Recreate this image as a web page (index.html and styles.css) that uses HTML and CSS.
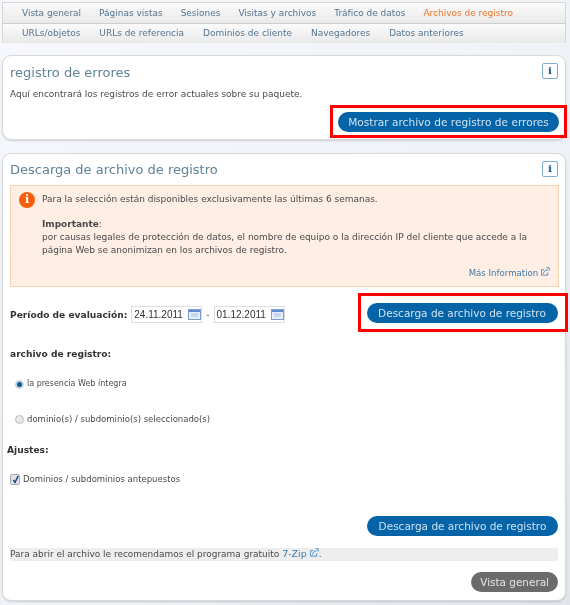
FILE: index.html
```html
<!DOCTYPE html>
<html lang="es">
<head>
    <meta charset="UTF-8">
    <meta name="viewport" content="width=device-width, initial-scale=1.0">
    <title>Archivos de registro</title>
    <link rel="stylesheet" href="styles.css">
</head>
<body>
    <nav class="tabs">
        <div class="tab-row tab-row-main">
            <a href="#">Vista general</a>
            <a href="#">Páginas vistas</a>
            <a href="#">Sesiones</a>
            <a href="#">Visitas y archivos</a>
            <a href="#">Tráfico de datos</a>
            <a href="#" class="active">Archivos de registro</a>
        </div>
        <div class="tab-row">
            <a href="#">URLs/objetos</a>
            <a href="#">URLs de referencia</a>
            <a href="#">Dominios de cliente</a>
            <a href="#">Navegadores</a>
            <a href="#">Datos anteriores</a>
        </div>
    </nav>

    <section class="card card-errors">
        <a href="#" class="info-btn">i</a>
        <h2 class="card-title">registro de errores</h2>
        <p class="card-text">Aquí encontrará los registros de error actuales sobre su paquete.</p>
        <div class="action-end">
            <div class="highlight highlight-errors">
                <a href="#" class="pill">Mostrar archivo de registro de errores</a>
            </div>
        </div>
    </section>

    <section class="card card-download">
        <a href="#" class="info-btn">i</a>
        <h2 class="card-title">Descarga de archivo de registro</h2>

        <div class="notice">
            <span class="notice-icon">i</span>
            <div class="notice-body">
                <p>Para la selección están disponibles exclusivamente las últimas 6 semanas.</p>
                <p class="notice-important"><strong>Importante</strong>:<br>por causas legales de protección de datos, el nombre de equipo o la dirección IP del cliente que accede a la página Web se anonimizan en los archivos de registro.</p>
                <p class="notice-more">
                    <a href="#">Más Information</a>
                    <svg class="ext-icon" viewBox="0 0 10 10" fill="none" stroke="currentColor" stroke-width="1"><path d="M7.5 6v3h-7V3h3"/><path d="M2.5 7.5C3 5 5 3.2 7.5 3M6 .8h3.2V4"/></svg>
                </p>
            </div>
        </div>

        <div class="period-row">
            <div class="period">
                <label class="field-label">Período de evaluación:</label>
                <span class="date-input date-from">24.11.2011
                    <svg class="cal-icon" viewBox="0 0 13 11"><rect x=".5" y=".5" width="12" height="10" fill="#e6eef8" stroke="#7d9fd0"/><rect x="1" y="1" width="11" height="2" fill="#5d8ad0"/><path d="M3 5h7M3 7h7" stroke="#a9bfdf"/></svg>
                </span>
                <span class="date-sep">-</span>
                <span class="date-input">01.12.2011
                    <svg class="cal-icon" viewBox="0 0 13 11"><rect x=".5" y=".5" width="12" height="10" fill="#e6eef8" stroke="#7d9fd0"/><rect x="1" y="1" width="11" height="2" fill="#5d8ad0"/><path d="M3 5h7M3 7h7" stroke="#a9bfdf"/></svg>
                </span>
            </div>
            <div class="highlight highlight-download">
                <a href="#" class="pill pill-wide">Descarga de archivo de registro</a>
            </div>
        </div>

        <h3 class="field-label group-title">archivo de registro:</h3>
        <label class="choice choice-first"><span class="radio checked"></span>la presencia Web íntegra</label>
        <label class="choice choice-second"><span class="radio"></span>dominio(s) / subdominio(s) seleccionado(s)</label>

        <h3 class="field-label settings-title">Ajustes:</h3>
        <label class="choice choice-check">
            <span class="checkbox"><svg viewBox="0 0 10 10" fill="none" stroke="#24407e" stroke-width="1.6"><path d="M2.5 5.5l2 2.6L8 1"/></svg></span>Dominios / subdominios antepuestos
        </label>

        <div class="action-end action-bottom">
            <a href="#" class="pill pill-wide">Descarga de archivo de registro</a>
        </div>

        <p class="hint">Para abrir el archivo le recomendamos el programa gratuito <a href="#">7-Zip</a>
            <svg class="ext-icon" viewBox="0 0 10 10" fill="none" stroke="currentColor" stroke-width="1"><path d="M7.5 6v3h-7V3h3"/><path d="M2.5 7.5C3 5 5 3.2 7.5 3M6 .8h3.2V4"/></svg>.</p>

        <div class="action-end action-last">
            <a href="#" class="pill pill-grey">Vista general</a>
        </div>
    </section>
</body>
</html>
```

FILE: styles.css
```css
* {
    box-sizing: border-box;
}

body {
    width: 570px;
    height: 605px;
    margin: 0;
    padding: 2px 4px 0 2px;
    overflow: hidden;
    font-family: "DejaVu Sans", sans-serif;
    font-size: 8.98px;
    line-height: 12px;
    color: #4a4a4a;
    background: linear-gradient(135deg, #f6f8fd 0%, #eef1f6 60%, #e1e5eb 100%);
    filter: blur(0.4px);
}

a {
    text-decoration: none;
}

p {
    margin: 0;
}

/* tabs */
.tabs {
    height: 41px;
    border: 1px solid #d6d6d6;
    background: #f0f0f0;
}

.tab-row {
    display: flex;
    height: 20px;
    padding: 0 0 1px 19px;
    gap: 19px;
    align-items: center;
    background: linear-gradient(#fbfbfb, #e9e9e9);
}

.tab-row-main {
    gap: 18px;
}

.tab-row + .tab-row {
    border-top: 1px solid #cfcfcf;
}

.tab-row a {
    color: #557591;
}

.tab-row a.active {
    color: #f0762a;
}

/* cards */
.card {
    position: relative;
    margin-top: 12px;
    padding-left: 7px;
    border: 1px solid #d9d9d9;
    border-radius: 9px;
    background: #fff;
    box-shadow: 0 1px 2px rgba(0, 0, 0, 0.15);
}

.card-errors {
    height: 85px;
    padding-top: 9px;
}

.card-download {
    height: 448px;
    margin-top: 13px;
    padding-top: 8px;
}

.card-title {
    margin: 0;
    font-size: 13px;
    line-height: 16px;
    font-weight: normal;
    color: #5f8296;
}

.card-text {
    margin-top: 7px;
}

.info-btn {
    position: absolute;
    top: 7px;
    right: 7px;
    width: 16px;
    height: 16px;
    border: 1.5px solid #7fabcf;
    border-radius: 2px;
    font-family: "DejaVu Serif", serif;
    font-size: 10px;
    font-weight: bold;
    line-height: 13px;
    text-align: center;
    color: #1d4f7e;
    background: #fbfdff;
}

/* buttons */
.pill {
    display: inline-block;
    height: 20px;
    padding: 0 9px;
    border-radius: 10px;
    font-size: 10.6px;
    line-height: 20px;
    white-space: nowrap;
    color: #cfe2ef;
    background: #0563a8;
}

.pill-wide {
    width: 191px;
    padding: 0;
    font-size: 10.5px;
    text-align: center;
}

.pill-grey {
    font-size: 10.45px;
    color: #e4e4e4;
    background: #6b6b6b;
}

.action-end {
    display: flex;
    justify-content: flex-end;
    padding-right: 7px;
}

.highlight {
    display: flex;
    justify-content: center;
    align-items: center;
    border: 3px solid #f00;
    background: #fff;
}

.highlight-errors {
    width: 237px;
    height: 33px;
    margin: 5px -9px 0 0;
}

.highlight-errors .pill {
    padding: 0 10px;
}

.highlight-download {
    width: 210px;
    height: 39px;
    margin-right: -3px;
    padding-right: 2px;
}

/* orange notice */
.notice {
    display: flex;
    width: 549px;
    height: 102px;
    margin-top: 7px;
    padding: 7px 8px 0 8px;
    border: 1px solid #fad3b0;
    background: #feeee3;
}

.notice-icon {
    flex: none;
    width: 16px;
    height: 16px;
    margin-top: -1px;
    border-radius: 50%;
    font-family: "DejaVu Serif", serif;
    font-weight: bold;
    font-size: 11px;
    line-height: 16px;
    text-align: center;
    color: #fff;
    background: #f65f0c;
}

.notice-body {
    flex: 1;
    padding-left: 7px;
}

.notice-important {
    margin-top: 13px;
    line-height: 13px;
}

.notice-more {
    margin-top: 10px;
    font-size: 8.6px;
    text-align: right;
    color: #3f7bab;
}

.notice-more a,
.hint a {
    color: #3f7bab;
}

.hint a {
    font-size: 9.5px;
}

.ext-icon {
    width: 9px;
    height: 9px;
    color: #3f8ac4;
}

/* form */
.period-row {
    display: flex;
    justify-content: space-between;
    align-items: center;
    width: 555px;
    height: 39px;
    margin-top: 6px;
}

.period {
    display: flex;
    align-items: center;
    margin-top: 4px;
}

.field-label {
    margin: 0;
    font-size: 9.1px;
    font-weight: bold;
    color: #333;
}

.date-input {
    display: flex;
    justify-content: space-between;
    align-items: center;
    width: 71px;
    height: 17px;
    padding-left: 2px;
    border: 1px solid #ddd;
    font-family: "Liberation Sans", sans-serif;
    font-size: 10px;
    color: #333;
    background: #fff;
}

.date-from {
    margin-left: 4px;
}

.date-sep {
    margin: 0 4px 0 4px;
}

.cal-icon {
    width: 13px;
    height: 11px;
}

.group-title {
    margin-top: 16px;
}

.settings-title {
    margin: 18px 0 0 -3px;
}

.choice {
    display: flex;
    align-items: center;
    height: 14px;
    font-size: 8.5px;
}

.choice-first {
    margin: 17px 0 0 5px;
    font-size: 8px;
}

.choice-second {
    margin: 21px 0 0 5px;
}

.choice-check {
    margin-top: 16px;
}

.radio {
    flex: none;
    display: flex;
    width: 9px;
    height: 9px;
    margin-right: 3px;
    border: 1px solid #bbb;
    border-radius: 50%;
    background: #e8e8e8;
}

.radio.checked {
    border: 2px solid #c9d3dc;
    background: #0c5a94;
}

.checkbox {
    flex: none;
    width: 10px;
    height: 11px;
    margin-right: 3px;
    border: 1px solid #aaa;
    border-radius: 2px;
    background: #dde3ea;
}

.checkbox svg {
    display: block;
    width: 9px;
    height: 9px;
}

.action-bottom {
    margin-top: 30px;
}

.hint {
    width: 548px;
    height: 13px;
    margin-top: 12px;
    background: #eee;
}

.action-last {
    margin-top: 11px;
}
```
